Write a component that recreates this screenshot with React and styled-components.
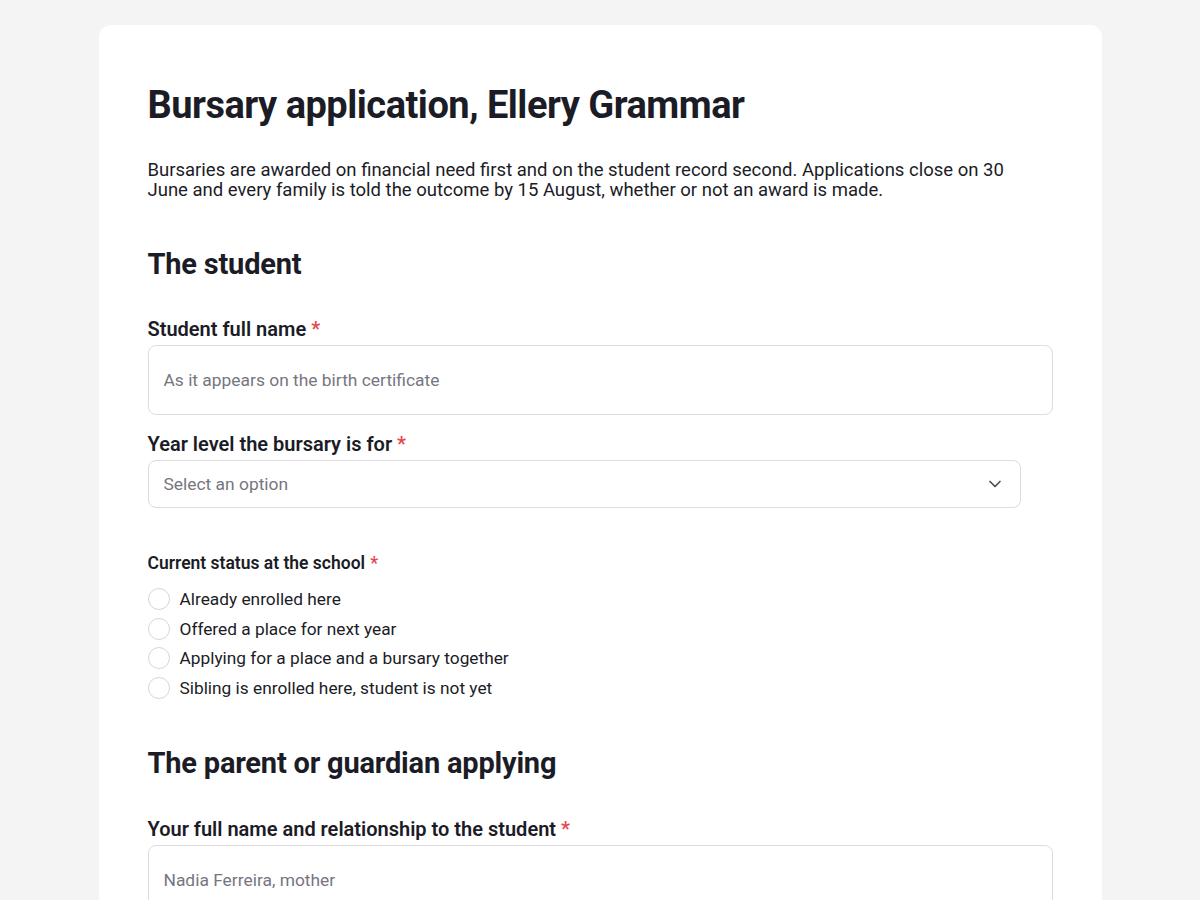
import React from 'react'
import styled, { createGlobalStyle } from 'styled-components'

const GlobalStyle = createGlobalStyle`
  html, body {
    margin: 0;
    padding: 0;
    background: #f4f4f4;
  }
  body {
    font-family: Roboto, "Liberation Sans", sans-serif;
    color: #1b1c26;
  }
`

const Card = styled('main')`
  width: 1003px;
  box-sizing: border-box;
  margin: 25px auto 0;
  padding: 57px 49px 40px;
  background: #fff;
  border-radius: 12px;
`

const Title = styled('h1')`
  margin: 0;
  font-size: 38px;
  line-height: 46px;
  font-weight: 700;
  letter-spacing: -0.5px;
`

const Intro = styled('p')`
  margin: 32px 0 0;
  max-width: 880px;
  font-size: 18.5px;
  line-height: 20px;
  font-weight: 400;
`

const SectionTitle = styled('h2')`
  margin: ${(p) => p.gap}px 0 0;
  font-size: 29px;
  line-height: 36px;
  font-weight: 700;
  letter-spacing: -0.2px;
`

const Field = styled('div')`
  margin-top: ${(p) => p.gap}px;
  display: flex;
  flex-direction: column;
`

const Label = styled('label')`
  font-size: ${(p) => (p.small ? 17.5 : 20)}px;
  line-height: 24px;
  font-weight: 600;
  margin-bottom: ${(p) => (p.small ? 13 : 4)}px;
`

const Required = styled('span')`
  color: #e5484d;
  margin-left: 5px;
`

const TextInput = styled('input')`
  box-sizing: border-box;
  width: 100%;
  height: 70px;
  padding: 0 15px;
  border: 1px solid #dcdce2;
  border-radius: 8px;
  font: inherit;
  font-size: 17.4px;
  color: #1b1c26;
  background: #fff;
  &::placeholder {
    color: #76767f;
  }
`

const SelectBox = styled('div')`
  box-sizing: border-box;
  width: 873px;
  height: 48px;
  padding: 0 15px 0 15px;
  border: 1px solid #dcdce2;
  border-radius: 8px;
  display: flex;
  align-items: center;
  justify-content: space-between;
  font-size: 17.4px;
  color: #76767f;
`

const RadioList = styled('div')`
  display: flex;
  flex-direction: column;
  gap: 7.5px;
`

const RadioRow = styled('label')`
  display: flex;
  align-items: center;
  gap: 10px;
  font-size: 17.3px;
  line-height: 22px;
`

const RadioCircle = styled('span')`
  box-sizing: border-box;
  width: 22px;
  height: 22px;
  border-radius: 50%;
  border: 1px solid #d6d6dc;
  background: #fff;
  flex: none;
`

const Chevron = () => (
  <svg width="20" height="20" viewBox="0 0 24 24" fill="none" stroke="#4a4a55" strokeWidth="2" strokeLinecap="round" strokeLinejoin="round">
    <path d="M6 9l6 6 6-6" />
  </svg>
)

const statuses = [
  'Already enrolled here',
  'Offered a place for next year',
  'Applying for a place and a bursary together',
  'Sibling is enrolled here, student is not yet',
]

const App = () => {
  return (
    <>
      <GlobalStyle />
      <Card>
        <Title>Bursary application, Ellery Grammar</Title>
        <Intro>
          Bursaries are awarded on financial need first and on the student record second. Applications close on 30
          June and every family is told the outcome by 15 August, whether or not an award is made.
        </Intro>

        <SectionTitle gap={46}>The student</SectionTitle>
        <Field gap={35}>
          <Label>
            Student full name<Required>*</Required>
          </Label>
          <TextInput placeholder="As it appears on the birth certificate" />
        </Field>
        <Field gap={17}>
          <Label>
            Year level the bursary is for<Required>*</Required>
          </Label>
          <SelectBox>
            <span>Select an option</span>
            <Chevron />
          </SelectBox>
        </Field>
        <Field gap={43}>
          <Label small>
            Current status at the school<Required>*</Required>
          </Label>
          <RadioList>
            {statuses.map((s) => (
              <RadioRow key={s}>
                <RadioCircle />
                {s}
              </RadioRow>
            ))}
          </RadioList>
        </Field>

        <SectionTitle gap={46}>The parent or guardian applying</SectionTitle>
        <Field gap={36}>
          <Label>
            Your full name and relationship to the student<Required>*</Required>
          </Label>
          <TextInput placeholder="Nadia Ferreira, mother" />
        </Field>
      </Card>
    </>
  )
}

export default App
